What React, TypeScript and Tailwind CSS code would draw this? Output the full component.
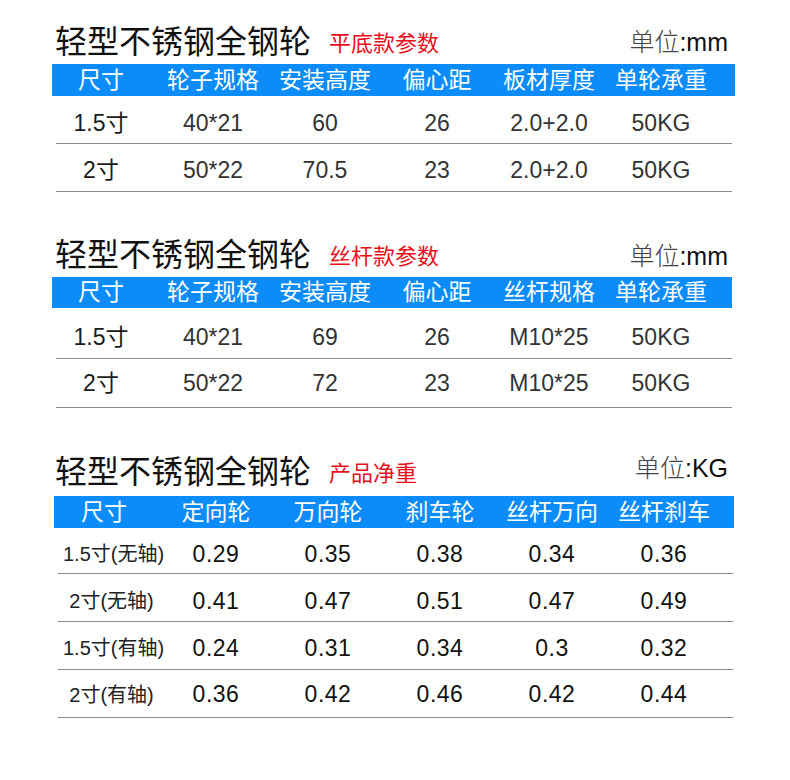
import React from 'react';

const FONT = "font-['Liberation_Sans','Noto_Sans_CJK_SC',sans-serif]";

interface Row {
  cells: string[];
  cls: string;
}

interface TableProps {
  title: string;
  sub: string;
  unit: string;
  titleRow: string;
  subCls: string;
  unitCls: string;
  headCls: string;
  heads: string[];
  rows: Row[];
  wrapCls: string;
  gridCls: string;
  lineCls: string;
  labelCls: string;
  valueCls: string;
}

function SpecTable(p: TableProps) {
  return (
    <section>
      <div className={`flex items-end justify-between pl-[55px] pr-[62px] ${p.titleRow}`}>
        <div className="flex items-end">
          <span className="text-[32px] leading-none text-[#111]">{p.title}</span>
          <span className={`ml-[18px] text-[22px] leading-none text-[#e8101c] ${p.subCls}`}>{p.sub}</span>
        </div>
        <span className={`text-[25px] leading-none ${p.unitCls}`}>
          <span className="font-light text-[#444]">单位</span>
          <span className="text-[#111]">:{p.unit}</span>
        </span>
      </div>
      <div className={p.wrapCls}>
        <div className={`bg-[#0b8cf8] ${p.headCls}`}>
          <div className={`grid h-full grid-cols-[repeat(6,112px)] items-center ${p.gridCls}`}>
            {p.heads.map((h) => (
              <div key={h} className="text-center text-[23px] leading-none text-white">
                {h}
              </div>
            ))}
          </div>
        </div>
        {p.rows.map((r, i) => (
          <div key={i}>
            <div className={`grid grid-cols-[repeat(6,112px)] items-center ${p.gridCls} ${r.cls}`}>
              {r.cells.map((c, j) => (
                <div key={j} className={`text-center leading-none whitespace-nowrap ${j === 0 ? p.labelCls : p.valueCls}`}>
                  {c}
                </div>
              ))}
            </div>
            <div className={`h-px bg-[#8c8c8c] ${p.lineCls}`} />
          </div>
        ))}
      </div>
    </section>
  );
}

export default function App() {
  return (
    <div className={`w-[790px] h-[780px] bg-white ${FONT}`}>
      <SpecTable
        title="轻型不锈钢全钢轮"
        sub="平底款参数"
        unit="mm"
        titleRow="h-[64px] pb-[6px]"
        subCls="mb-[3px]"
        unitCls="mb-[3px]"
        headCls="h-[32px]"
        heads={['尺寸', '轮子规格', '安装高度', '偏心距', '板材厚度', '单轮承重']}
        rows={[
          { cells: ['1.5寸', '40*21', '60', '26', '2.0+2.0', '50KG'], cls: 'h-[47px] pt-[7px]' },
          { cells: ['2寸', '50*22', '70.5', '23', '2.0+2.0', '50KG'], cls: 'h-[47px] pt-[5px]' },
        ]}
        wrapCls="ml-[52px] w-[683px]"
        gridCls="-ml-[7px]"
        lineCls="ml-[4px] w-[676px]"
        labelCls="text-[23px] text-[#1a1a1a]"
        valueCls="text-[23px] text-[#333]"
      />
      <SpecTable
        title="轻型不锈钢全钢轮"
        sub="丝杆款参数"
        unit="mm"
        titleRow="h-[85px] pb-[6px]"
        subCls="mb-[3px]"
        unitCls="mb-[2px]"
        headCls="h-[31px]"
        heads={['尺寸', '轮子规格', '安装高度', '偏心距', '丝杆规格', '单轮承重']}
        rows={[
          { cells: ['1.5寸', '40*21', '69', '26', 'M10*25', '50KG'], cls: 'h-[50px] pt-[9px]' },
          { cells: ['2寸', '50*22', '72', '23', 'M10*25', '50KG'], cls: 'h-[48px] pt-[1px]' },
        ]}
        wrapCls="ml-[52px] w-[680px]"
        gridCls="-ml-[7px]"
        lineCls="ml-[4px] w-[676px]"
        labelCls="text-[23px] text-[#1a1a1a]"
        valueCls="text-[23px] text-[#333]"
      />
      <SpecTable
        title="轻型不锈钢全钢轮"
        sub="产品净重"
        unit="KG"
        titleRow="h-[88px] pb-[8px]"
        subCls="mb-[3px]"
        unitCls="mb-[7px]"
        headCls="h-[32px]"
        heads={['尺寸', '定向轮', '万向轮', '刹车轮', '丝杆万向', '丝杆刹车']}
        rows={[
          { cells: ['1.5寸(无轴)', '0.29', '0.35', '0.38', '0.34', '0.36'], cls: 'h-[45px] pt-[7px]' },
          { cells: ['2寸(无轴)', '0.41', '0.47', '0.51', '0.47', '0.49'], cls: 'h-[47px] pt-[7px]' },
          { cells: ['1.5寸(有轴)', '0.24', '0.31', '0.34', '0.3', '0.32'], cls: 'h-[47px] pt-[5px]' },
          { cells: ['2寸(有轴)', '0.36', '0.42', '0.46', '0.42', '0.44'], cls: 'h-[47px] pt-[2px]' },
        ]}
        wrapCls="ml-[54px] w-[680px]"
        gridCls="-ml-[6px]"
        lineCls="ml-[4px] w-[675px]"
        labelCls="pl-[15px] text-[20px] text-[#222]"
        valueCls="text-[23px] tracking-[0.5px] text-[#111]"
      />
    </div>
  );
}
